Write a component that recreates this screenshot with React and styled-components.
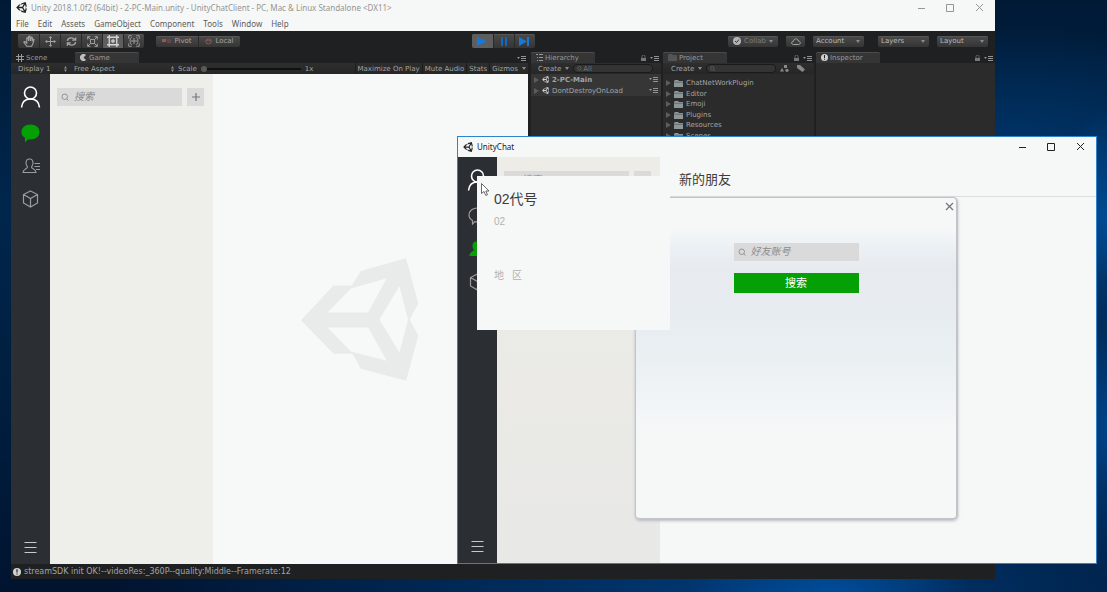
import React from "react";
import styled, { createGlobalStyle, css } from "styled-components";

const ui = '"DejaVu Sans", "Liberation Sans", sans-serif';
const win = '"Noto Sans", "Open Sans", sans-serif';
const cjk = '"Liberation Sans", "Noto Sans CJK SC", sans-serif';

const Global = createGlobalStyle`
  *, *::before, *::after { box-sizing: border-box; }
  body { margin: 0; background: #001c3a; }
  button, input, select { font: inherit; color: inherit; margin: 0; padding: 0; border: 0; background: none; border-radius: 0; }
  svg { display: block; flex: none; }
  h1, h2, p, ul { margin: 0; padding: 0; font: inherit; list-style: none; }
`;

const Desktop = styled.main`
  position: relative;
  min-height: 100vh;
  overflow: hidden;
  font-family: ${ui};
  background:
    radial-gradient(ellipse 50px 110px at 100% 37%, #004c96 0%, transparent 100%),
    radial-gradient(ellipse 50px 150px at 100% 72%, #00448a 0%, transparent 100%),
    radial-gradient(ellipse 140px 60px at 75% 100%, #004c98 0%, transparent 100%),
    radial-gradient(ellipse 640px 120px at 68% 100%, #003a76 0%, transparent 100%),
    radial-gradient(ellipse 260px 120px at 92% 25%, #003468 0%, transparent 100%),
    linear-gradient(180deg, #001a36 0%, #00264c 35%, #001c3c 75%, #001430 100%);
`;

/* ---------- editor window ---------- */

const EditorWindow = styled.section`
  position: absolute;
  inset: 0 112px 13px 11px;
  display: flex;
  flex-direction: column;
  background: #1e2021;
  color: #a4a4a4;
  font-size: 7px;
  line-height: 10px;
`;

const TitleBar = styled.header`
  display: flex;
  align-items: center;
  flex: none;
  height: ${(p) => p.$height}px;
  padding: 0 10px 1px 5px;
  background: #f6f8f8;
  color: ${(p) => (p.$active ? "#222" : "#959595")};
  font: 8px/12px ${win};
  gap: 4px;
`;

const WindowTitle = styled.h1`
  flex: 1;
  white-space: nowrap;
`;

const WindowButtons = styled.div`
  display: flex;
  gap: 17px;
  button { width: 12px; height: 12px; display: grid; place-items: center; }
`;

const MenuBar = styled.nav`
  display: flex;
  align-items: center;
  flex: none;
  gap: 9px;
  height: 15px;
  padding-left: 5px;
  background: #f6f8f8;
  color: #5c5c5c;
  font: 8px/12px ${win};
`;

const Toolbar = styled.div`
  display: grid;
  grid-template-columns: 1fr auto 1fr;
  align-items: center;
  flex: none;
  height: 20px;
  padding: 0 7px;
`;

const ToolGroup = styled.div`
  display: flex;
  align-items: center;
  gap: ${(p) => p.$gap || 0}px;
  justify-content: ${(p) => (p.$end ? "flex-end" : "flex-start")};
`;

const raised = css`
  background: linear-gradient(#4a4a4a, #353535);
  box-shadow: inset 0 1px #565656;
`;

const Segments = styled.div`
  display: flex;
  overflow: hidden;
  border-radius: 2px;
  ${raised}
`;

const Segment = styled.button`
  display: flex;
  align-items: center;
  justify-content: center;
  gap: 3px;
  width: ${(p) => p.$width}px;
  height: ${(p) => p.$height}px;
  background: ${(p) => (p.$on ? "#5e5e5e" : "transparent")};
  color: ${(p) => (p.$on ? "#d4d4d4" : "inherit")};
  & + & { border-left: 1px solid #2a2a2a; }
`;

const PillButton = styled.button`
  display: flex;
  align-items: center;
  justify-content: center;
  gap: 3px;
  width: ${(p) => p.$width}px;
  height: 11px;
  border-radius: 2px;
  color: ${(p) => (p.$dim ? "#7c7c7c" : "#a4a4a4")};
  ${raised}
`;

const SelectBox = styled.label`
  position: relative;
  display: flex;
  align-items: center;
  width: ${(p) => p.$width}px;
  height: 11px;
  ${(p) => p.$raised && css`border-radius: 2px; color: #bababa; ${raised}`}
  select { flex: 1; min-width: 0; height: 11px; appearance: none; padding-left: 3px; line-height: 10px; outline: none; }
  svg { position: absolute; right: 4px; pointer-events: none; }
`;

const Panels = styled.div`
  display: grid;
  grid-template-columns: minmax(0, 1fr) 130px 151px 179px;
  column-gap: 2px;
  flex: 1;
  min-height: 0;
`;

const Panel = styled.section`
  display: flex;
  flex-direction: column;
  min-width: 0;
  background: #2b2b2b;
  &:first-child { border-right: 1px solid #1e2021; }
`;

const TabRow = styled.div`
  display: flex;
  align-items: flex-end;
  flex: none;
  height: 12px;
  background: #1e2021;
`;

const Tab = styled.button`
  display: flex;
  align-items: center;
  gap: 2px;
  width: 64px;
  height: 11px;
  padding-left: 5px;
  border-radius: 2px 2px 0 0;
  color: #9a9a9a;
  ${(p) => p.$on && css`background: #353535; box-shadow: inset 0 1px #4c4c4c;`}
`;

const TabTools = styled.div`
  display: flex;
  align-items: center;
  gap: 4px;
  height: 10px;
  margin-left: auto;
  padding-right: 2px;
`;

const SubBar = styled.div`
  display: flex;
  align-items: center;
  flex: none;
  height: 11px;
  padding-left: ${(p) => p.$indent || 0}px;
  background: linear-gradient(#2e2e2e, #262626);
  white-space: nowrap;
`;

const BarButton = styled.button`
  display: flex;
  align-items: center;
  gap: 4px;
  height: 11px;
  padding: 0 2px;
  border-left: ${(p) => (p.$ruled ? "1px solid #1c1c1c" : 0)};
`;

const ScaleControl = styled.label`
  display: flex;
  align-items: center;
  flex: 1;
  min-width: 0;
  gap: 4px;
  input { appearance: none; width: 100px; height: 6px; outline: none; }
  input::-webkit-slider-runnable-track { height: 2px; background: #101212; }
  input::-webkit-slider-thumb { appearance: none; width: 6px; height: 6px; margin-top: -2px; border-radius: 50%; background: #5a5a5a; }
`;

const FilterBox = styled.label`
  display: flex;
  align-items: center;
  gap: 1px;
  width: ${(p) => p.$width}px;
  height: 9px;
  margin: 0 2px;
  padding-left: 3px;
  border: 1px solid #1a1a1a;
  border-radius: 4px;
  background: #343434;
  color: #777;
  input { flex: 1; min-width: 0; height: 8px; line-height: 8px; outline: none; }
  input::placeholder { color: #777; }
`;

const Tree = styled.ul`
  flex: 1;
  min-height: 0;
  overflow: hidden;
  padding-top: ${(p) => p.$top || 0}px;
`;

const TreeRow = styled.li`
  display: flex;
  align-items: center;
  gap: 3px;
  height: ${(p) => (p.$scene ? 11 : 10)}px;
  padding: 0 3px;
  background: ${(p) => (p.$scene ? "#363636" : "none")};
  font-weight: ${(p) => (p.$strong ? 700 : 400)};
  margin-bottom: ${(p) => (p.$scene ? 0 : 1)}px;
  &:nth-child(even) { margin-bottom: 0; }
  span { flex: 1; }
`;

const StatusBar = styled.footer`
  display: flex;
  align-items: center;
  gap: 3px;
  flex: none;
  height: 15px;
  padding-left: 2px;
  font-size: 8px;
`;

/* ---------- chat client, shared by the game view and the window ---------- */

const ChatLayout = styled.div`
  display: flex;
  flex: 1;
  min-height: 0;
  font-family: ${cjk};
`;

const Rail = styled.nav`
  display: flex;
  flex-direction: column;
  align-items: center;
  flex: none;
  gap: 15px;
  width: 39px;
  padding: 11px 0;
  background: #2b2e32;
  color: #9a9da0;
  button { display: grid; place-items: center; height: 18px; }
  button:first-child { height: 24px; color: #fff; }
  button:last-child { margin-top: auto; height: 13px; color: #c8caca; }
`;

const ChatList = styled.aside`
  flex: none;
  width: 163px;
  padding: 14px 7px;
  background: ${(p) => (p.$shade ? "linear-gradient(#edece7, #e8e8e6)" : "#eeeeea")};
`;

const SearchRow = styled.div`
  display: flex;
  gap: 5px;
`;

const SearchField = styled.label`
  display: flex;
  align-items: center;
  gap: 5px;
  width: 125px;
  height: 18px;
  padding-left: 4px;
  background: #dadada;
  color: #8c8c8c;
  input { flex: 1; min-width: 0; font: italic 10px/14px ${cjk}; outline: none; }
  input::placeholder { color: #8c8c8c; opacity: 1; }
`;

const AddButton = styled.button`
  display: grid;
  place-items: center;
  width: 17px;
  height: 18px;
  background: #dadada;
  color: #777;
`;

const Canvas = styled.div`
  display: flex;
  flex: 1;
  align-items: center;
  justify-content: center;
  padding-right: 22px;
  background: #f7f8f8;
`;

const ChatWindow = styled.section`
  position: absolute;
  inset: 136px 10px 28px 457px;
  display: flex;
  flex-direction: column;
  border: 1px solid #2c84cc;
  background: #f6f8f8;
`;

const ChatMain = styled.div`
  flex: 1;
  min-width: 0;
  background: #f6f7f7;
`;

const ChatHeader = styled.h2`
  height: 40px;
  padding: 13px 19px;
  border-bottom: 1px solid #dcdfdf;
  color: #3c3c3c;
  font: 13px/20px ${cjk};
`;

const FriendDialog = styled.form`
  position: absolute;
  top: 60px;
  left: 177px;
  display: flex;
  flex-direction: column;
  align-items: center;
  gap: 12px;
  width: 323px;
  height: 323px;
  padding-top: 45px;
  border: 1px solid #c2c5c8;
  border-width: 1px 2px 2px 1px;
  border-radius: 5px;
  background: linear-gradient(#f6f8f8 30px, #ebf0f4 50px, #e7ebf0 70px, #e7ecf1 115px, #ebf0f3 165px, #f6f8f8 235px);
  box-shadow: 0 1px 3px #b8bcc4;
  font-family: ${cjk};
`;

const CloseButton = styled.button`
  position: absolute;
  top: 4px;
  right: 2px;
  color: #777;
`;

const SubmitButton = styled.button`
  width: 125px;
  height: 20px;
  background: #05a005;
  color: #fff;
  font-size: 11px;
  line-height: 18px;
`;

const ProfileCard = styled.article`
  position: absolute;
  top: 39px;
  left: 19px;
  width: 193px;
  height: 154px;
  padding: 12px 17px;
  background: #f6f8f8;
  color: #b0b2b2;
  font: 10px/14px ${cjk};
  h2 { color: #3c3c3c; font-size: 14px; line-height: 22px; margin-bottom: 5px; }
  p + p { margin-top: 40px; word-spacing: normal; }
`;

const Region = styled.p`
  display: flex;
  gap: 8px;
`;

const Pointer = styled.svg`
  position: absolute;
  top: 46px;
  left: 23px;
`;

/* ---------- icons ---------- */

const Line = ({ size = 10, w = size, h = size, box = "0 0 16 16", sw = 1.4, children }) => (
  <svg width={w} height={h} viewBox={box} fill="none" stroke="currentColor" strokeWidth={sw} aria-hidden="true">{children}</svg>
);

const UnityMark = ({ w, h, color }) => (
  <svg width={w} height={h} viewBox="60 52 355 368" aria-hidden="true">
    <path fill={color} fillRule="evenodd" d="M60 238 158 134H213L240 90 376 52 413 188 387 236 413 285 376 420 240 384 215 339H158ZM140 215H262L318 112 210 143ZM140 260 210 332 318 360 262 260ZM356 135 296 236 356 336 382 236Z" />
  </svg>
);

const Caret = () => <svg width="4" height="3" viewBox="0 0 4 3"><path d="M0 0H4L2 3Z" fill="#8a8a8a" /></svg>;
const UpDown = () => <svg width="3" height="6" viewBox="0 0 3 6"><path d="M0 2.5 1.5 0 3 2.5ZM0 3.5H3L1.5 6Z" fill="#8a8a8a" /></svg>;
const Lens = ({ size = 8 }) => <Line size={size} sw={1.8}><circle cx="7.5" cy="7.5" r="5.5" /><path d="M11.5 11.5 15 15" /></Line>;
const PanelMenu = () => <svg width="9" height="5" viewBox="0 0 9 5"><path d="M0 1H3L1.5 3ZM4 0H9V1H4ZM4 2H9V3H4ZM4 4H9V5H4Z" fill="#929292" /></svg>;
const Lock = () => <svg width="5" height="6" viewBox="0 0 5 6"><path d="M1 3V1.5a1.5 1.5 0 0 1 3 0V3" fill="none" stroke="#777" strokeWidth=".8" /><path d="M0 3H5V6H0Z" fill="#777" /></svg>;
const Info = ({ size = 7 }) => <svg width={size} height={size} viewBox="0 0 8 8"><circle cx="4" cy="4" r="4" fill="#d0d0d0" /><path d="M3.4 1.2H4.6V4.6H3.4ZM3.4 5.4H4.6V6.6H3.4Z" fill="#222" /></svg>;
const Plus = () => <Line size={10} box="0 0 10 10" sw={1.2}><path d="M5 1V9M1 5H9" /></Line>;
const Cross = ({ size = 9, sw = 1 }) => <Line size={size} box="0 0 9 9" sw={sw}><path d="M1 1 8 8M8 1 1 8" /></Line>;
const Folder = ({ color = "#8d9698" }) => <svg width="9" height="7" viewBox="0 0 9 7"><path d="M0 1 1 0H4L5 1H9V7H0Z" fill={color} /><path d="M0 2.3H9" stroke="#4c5254" strokeWidth=".6" /></svg>;
const Fold = () => <svg width="5" height="6" viewBox="0 0 5 6"><path d="M0 0 5 3 0 6Z" fill="#5c5c5c" /></svg>;

const PersonIcon = () => <Line w={22} h={24} box="0 0 22 24" sw={1.6}><circle cx="10.500" cy="8" r="6" /><path d="M1.500 22.500C2 17 5.500 14 10.500 14S19 17 19.500 22.500" /></Line>;
const ChatIcon = ({ on }) => (
  <Line w={19} h={18} box="0 0 19 18" sw={1.2}>
    <path d="M9.500 1C14.500 1 18 4 18 8S14.500 15 9.500 15C8.500 15 7.500 14.900 6.800 14.600L4.500 17V13.500C2.300 12.200 1 10.300 1 8 1 4 4.500 1 9.500 1Z" fill={on ? "#05a005" : "none"} stroke={on ? "#05a005" : "currentColor"} />
  </Line>
);
const ContactIcon = ({ on }) => (
  <Line w={18} h={16} box="0 0 18 16" sw={1.1}>
    <path d="M7.500 1C10 1 11 2.800 11 5 11 7 10 8 9.500 9 9.500 11 14 10.500 14 14.500H1C1 10.500 5.500 11 5.500 9 5 8 4 7 4 5 4 2.800 5 1 7.500 1Z" fill={on ? "#05a005" : "none"} stroke={on ? "#05a005" : "currentColor"} />
    <path d="M12.500 5.500H18M12.500 8.500H18M14 11.500H18" />
  </Line>
);
const CubeIcon = () => <Line w={17} h={18} box="0 0 17 18" sw={1.2}><path d="M8.500 1 15.500 4.500V13L8.500 17 1.500 13V4.500ZM1.500 4.500 8.500 8.500 15.500 4.500M8.500 8.500V17" /></Line>;
const BurgerIcon = () => <Line w={13} h={12} box="0 0 13 12" sw={1}><path d="M.5 1.500H12.500M.5 6.500H12.500M.5 11.500H12.500" /></Line>;

const toolIcons = {
  Hand: <Line size={12}><path d="M5 15 1 9.500 2.500 8.500 5 11V4L6.500 3.500 7.500 8V2L9 1.500 9.800 8 11 2.500 12.400 3 12 8.500 13.500 5.500 14.800 6 13 12 11.500 15Z" /></Line>,
  Move: <Line size={11}><path d="M8 1V15M1 8H15M6 3 8 1 10 3M6 13 8 15 10 13M3 6 1 8 3 10M13 6 15 8 13 10" /></Line>,
  Rotate: <Line size={11} sw={2}><path d="M2 7C3 2 11 1 13 6M14 9C13 14 5 15 3 10M9 6H14V2M7 10H2V14" /></Line>,
  Scale: <Line size={11}><path d="M5 5H11V11H5ZM1 5V1H5M11 1H15V5M15 11V15H11M5 15H1V11M1 1 5 5M15 1 11 5M15 15 11 11M1 15 5 11" /></Line>,
  Rect: <Line size={12} sw={1.8}><path d="M3 3H13V13H3ZM3 0V3H0M13 0V3H16M3 16V13H0M13 16V13H16" /><circle cx="8" cy="8" r="1.500" /></Line>,
  Transform: <Line size={12} sw={1.200}><path d="M1 5V1H5M11 1H15V5M15 11V15H11M5 15H1V11M8 4V12M4 8H12" /><path d="M5 3C2 5 2 11 5 13M11 3C14 5 14 11 11 13" /></Line>,
};

const WinControls = () => (
  <WindowButtons>
    <button type="button" aria-label="Minimize"><Line size={8} box="0 0 8 8" sw={1}><path d="M1 4.500H8" /></Line></button>
    <button type="button" aria-label="Maximize"><Line size={8} box="0 0 8 8" sw={1}><path d="M.5 .5H7.500V7.500H.5Z" /></Line></button>
    <button type="button" aria-label="Close"><Cross size={9} /></button>
  </WindowButtons>
);

const Select = ({ label, width, raised: up, double }) => (
  <SelectBox $width={width} $raised={up}>
    <select aria-label={label}><option>{label}</option></select>
    {double ? <UpDown /> : <Caret />}
  </SelectBox>
);

const ChatRail = ({ active }) => (
  <Rail>
    <button type="button" aria-label="Profile"><PersonIcon /></button>
    <button type="button" aria-label="Chats"><ChatIcon on={active === "chats"} /></button>
    <button type="button" aria-label="Contacts"><ContactIcon on={active === "contacts"} /></button>
    <button type="button" aria-label="Apps"><CubeIcon /></button>
    <button type="button" aria-label="Menu"><BurgerIcon /></button>
  </Rail>
);

const Search = ({ placeholder }) => (
  <SearchField>
    <Lens size={8} />
    <input type="text" aria-label={placeholder} placeholder={placeholder} />
  </SearchField>
);

const ListPane = ({ shade }) => (
  <ChatList $shade={shade}>
    <SearchRow>
      <Search placeholder="搜索" />
      <AddButton type="button" aria-label="Add"><Plus /></AddButton>
    </SearchRow>
  </ChatList>
);

const menus = ["File", "Edit", "Assets", "GameObject", "Component", "Tools", "Window", "Help"];
const folders = ["ChatNetWorkPlugin", "Editor", "Emoji", "Plugins", "Resources", "Scenes"];

export default function App() {
  return (
    <>
      <Global />
      <Desktop>
        <EditorWindow>
          <TitleBar $height={16}>
            <UnityMark w={11} h={11} color="#222" />
            <WindowTitle>{"Unity 2018.1.0f2 (64bit) - 2-PC-Main.unity - UnityChatClient - PC, Mac & Linux Standalone <DX11>"}</WindowTitle>
            <WinControls />
          </TitleBar>
          <MenuBar>{menus.map((m) => <button type="button" key={m}>{m}</button>)}</MenuBar>

          <Toolbar>
            <ToolGroup $gap={12}>
              <Segments>
                {Object.entries(toolIcons).map(([name, icon]) => (
                  <Segment type="button" key={name} aria-label={name} $width={21} $height={14} $on={name === "Rect"}>{icon}</Segment>
                ))}
              </Segments>
              <Segments>
                <Segment type="button" $width={42} $height={11}>
                  <svg width="9" height="5" viewBox="0 0 9 5"><path d="M0 0H4V3H0Z" fill="#9c5650" /><path d="M5 0H9V4H5Z" fill="#6c4444" /></svg>Pivot
                </Segment>
                <Segment type="button" $width={42} $height={11}>
                  <svg width="7" height="7" viewBox="0 0 7 7" fill="none" stroke="#8c5650"><path d="M1 2 3.500 1 6 2V5L3.500 6 1 5ZM1 2 3.500 3 6 2" /></svg>Local
                </Segment>
              </Segments>
            </ToolGroup>
            <Segments>
              <Segment type="button" aria-label="Play" $width={21} $height={14} $on><svg width="10" height="9" viewBox="0 0 10 9"><path d="M0 0 10 4.500 0 9Z" fill="#1479d8" /></svg></Segment>
              <Segment type="button" aria-label="Pause" $width={21} $height={14}><svg width="8" height="9" viewBox="0 0 8 9"><path d="M1 0H3V9H1ZM5 0H7V9H5Z" fill="#1268c0" /></svg></Segment>
              <Segment type="button" aria-label="Step" $width={21} $height={14}><svg width="11" height="9" viewBox="0 0 11 9"><path d="M0 0 8 4.500 0 9ZM8 0H10V9H8Z" fill="#1479d8" /></svg></Segment>
            </Segments>
            <ToolGroup $gap={14} $end>
              <ToolGroup $gap={8}>
                <PillButton type="button" $width={50} $dim>
                  <svg width="8" height="8" viewBox="0 0 8 8"><circle cx="4" cy="4" r="4" fill="#b4b4b4" /><path d="M2 4 3.500 5.500 6 2.500" stroke="#333" fill="none" /></svg>
                  Collab <Caret />
                </PillButton>
                <PillButton type="button" aria-label="Cloud services" $width={19}>
                  <Line w={10} h={7} box="0 0 10 7" sw={1}><path d="M2.500 6.500C0 6.500 0 3.500 2.300 3.500 2.500 0 7 0 7.300 3 10 3 10 6.500 7.500 6.500Z" /></Line>
                </PillButton>
                <Select label="Account" width={51} raised />
              </ToolGroup>
              <ToolGroup $gap={8}>
                <Select label="Layers" width={51} raised />
                <Select label="Layout" width={51} raised />
              </ToolGroup>
            </ToolGroup>
          </Toolbar>

          <Panels>
            <Panel>
              <TabRow>
                <Tab type="button"><Line size={8} box="0 0 8 8" sw={1}><path d="M2.500 0V8M5.500 0V8M0 2.500H8M0 5.500H8" /></Line>Scene</Tab>
                <Tab type="button" $on>
                  <svg width="7" height="7" viewBox="0 0 7 7"><path d="M6 1A3.500 3.500 0 1 0 6 6L3.500 3.500Z" fill="#c0c0c0" /></svg>Game
                </Tab>
                <TabTools><PanelMenu /></TabTools>
              </TabRow>
              <SubBar $indent={4}>
                <Select label="Display 1" width={56} double />
                <Select label="Free Aspect" width={107} double />
                <ScaleControl>Scale<input type="range" min="1" max="5" defaultValue="1" /><span>1x</span></ScaleControl>
                <BarButton type="button" $ruled>Maximize On Play</BarButton>
                <BarButton type="button" $ruled>Mute Audio</BarButton>
                <BarButton type="button" $ruled>Stats</BarButton>
                <BarButton type="button" $ruled>Gizmos <Caret /></BarButton>
              </SubBar>
              <ChatLayout>
                <ChatRail active="chats" />
                <ListPane />
                <Canvas><UnityMark w={118} h={123} color="#e9eaea" /></Canvas>
              </ChatLayout>
            </Panel>

            <Panel>
              <TabRow>
                <Tab type="button" $on><Line w={7} h={7} box="0 0 7 7" sw={1}><path d="M0 .5H2M3 .5H7M1 3.500H2M3 3.500H7M1 6.500H2M3 6.500H7" /></Line>Hierarchy</Tab>
                <TabTools><Lock /><PanelMenu /></TabTools>
              </TabRow>
              <SubBar $indent={5}>
                <BarButton type="button">Create <Caret /></BarButton>
                <FilterBox $width={80}><Lens size={5} /><input type="text" aria-label="Search hierarchy" placeholder="All" /></FilterBox>
              </SubBar>
              <Tree>
                <TreeRow $scene $strong><Fold /><UnityMark w={7} h={7} color="#d0d0d0" /><span>2-PC-Main</span><PanelMenu /></TreeRow>
                <TreeRow $scene><Fold /><UnityMark w={7} h={7} color="#d0d0d0" /><span>DontDestroyOnLoad</span><PanelMenu /></TreeRow>
              </Tree>
            </Panel>

            <Panel>
              <TabRow>
                <Tab type="button" $on><Folder color="#555" />Project</Tab>
                <TabTools><Lock /><PanelMenu /></TabTools>
              </TabRow>
              <SubBar $indent={6}>
                <BarButton type="button">Create <Caret /></BarButton>
                <FilterBox $width={70}><Lens size={5} /><input type="text" aria-label="Search project" /></FilterBox>
                <ToolGroup $gap={4}>
                  <BarButton type="button" aria-label="Filter by type"><svg width="9" height="7" viewBox="0 0 9 7"><path d="M4 0H7V3H4ZM0 6.500 2 3 4 6.500Z" fill="#888" /><circle cx="7" cy="5.300" r="1.600" fill="#888" /></svg></BarButton>
                  <BarButton type="button" aria-label="Filter by label"><svg width="8" height="7" viewBox="0 0 8 7"><path d="M0 0H3L8 4.500 5.500 7 0 3Z" fill="#888" /></svg></BarButton>
                </ToolGroup>
              </SubBar>
              <Tree $top={4}>
                {folders.map((f) => <TreeRow key={f}><Fold /><Folder /><span>{f}</span></TreeRow>)}
              </Tree>
            </Panel>

            <Panel>
              <TabRow>
                <Tab type="button" $on><Info />Inspector</Tab>
                <TabTools><Lock /><PanelMenu /></TabTools>
              </TabRow>
            </Panel>
          </Panels>

          <StatusBar><Info size={8} /><span>streamSDK init OK!--videoRes:_360P--quality:Middle--Framerate:12</span></StatusBar>
        </EditorWindow>

        <ChatWindow>
          <TitleBar $height={20} $active>
            <UnityMark w={10} h={10} color="#222" />
            <WindowTitle>UnityChat</WindowTitle>
            <WinControls />
          </TitleBar>
          <ChatLayout>
            <ChatRail active="contacts" />
            <ListPane shade />
            <ChatMain><ChatHeader>新的朋友</ChatHeader></ChatMain>
          </ChatLayout>
          <FriendDialog onSubmit={(e) => e.preventDefault()}>
            <CloseButton type="button" aria-label="Close dialog"><Cross size={9} sw={1.3} /></CloseButton>
            <Search placeholder="好友账号" />
            <SubmitButton type="submit">搜索</SubmitButton>
          </FriendDialog>
          <ProfileCard>
            <h2>02代号</h2>
            <p>02</p>
            <Region><span>地</span><span>区</span></Region>
          </ProfileCard>
          <Pointer width="9" height="13" viewBox="0 0 9 13"><path d="M.5 .5V10.500L3 8.500 4.800 12.500 6.500 11.700 4.800 8H8Z" fill="#fff" stroke="#444" strokeWidth=".8" /></Pointer>
        </ChatWindow>
      </Desktop>
    </>
  );
}
